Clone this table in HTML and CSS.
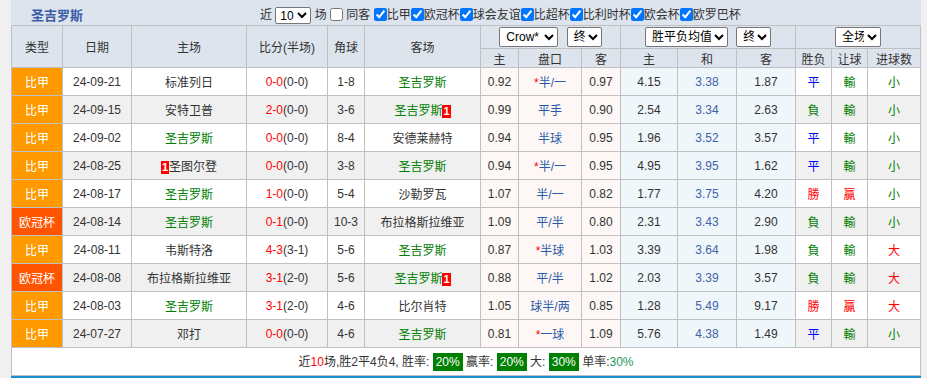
FILE: index.html
```html
<!DOCTYPE html>
<html lang="zh-CN">
<head>
    <meta charset="UTF-8">
    <title>圣吉罗斯 近期战绩</title>
    <link rel="stylesheet" href="styles.css">
</head>
<body>
    <div class="panel">
        <div class="panel-head">
            <div class="team-title">圣吉罗斯</div>
            <div class="filters">
                近 <select class="sel-count"><option>10</option></select> 场
                <input type="checkbox"> 同客
                <input type="checkbox" checked>比甲<input type="checkbox" checked>欧冠杯<input type="checkbox" checked>球会友谊<input type="checkbox" checked>比超杯<input type="checkbox" checked>比利时杯<input type="checkbox" checked>欧会杯<input type="checkbox" checked>欧罗巴杯
            </div>
        </div>
        <table class="record">
            <colgroup>
                <col class="w-type"><col class="w-date"><col class="w-team"><col class="w-score"><col class="w-corner"><col class="w-team2">
                <col class="w-a1"><col class="w-a2"><col class="w-a3">
                <col class="w-e1"><col class="w-e2"><col class="w-e3">
                <col class="w-r1"><col class="w-r2"><col class="w-r3">
            </colgroup>
            <thead>
                <tr class="head-top">
                    <th rowspan="2">类型</th>
                    <th rowspan="2">日期</th>
                    <th rowspan="2">主场</th>
                    <th rowspan="2">比分(半场)</th>
                    <th rowspan="2">角球</th>
                    <th rowspan="2">客场</th>
                    <th colspan="3"><select class="sel-crow"><option>Crow*</option></select> <select class="sel-end"><option>终</option></select></th>
                    <th colspan="3"><select class="sel-avg"><option>胜平负均值</option></select> <select class="sel-end"><option>终</option></select></th>
                    <th colspan="3"><select class="sel-full"><option>全场</option></select></th>
                </tr>
                <tr class="head-sub">
                    <th>主</th><th>盘口</th><th>客</th>
                    <th>主</th><th>和</th><th>客</th>
                    <th>胜负</th><th>让球</th><th>进球数</th>
                </tr>
            </thead>
            <tbody>
                <tr>
                    <td class="type-league">比甲</td><td>24-09-21</td><td>标准列日</td>
                    <td><span class="hot">0-0</span>(0-0)</td><td>1-8</td><td class="us">圣吉罗斯</td>
                    <td class="asian">0.92</td><td class="asian line"><span class="star">*</span>半/一</td><td class="asian">0.97</td>
                    <td class="euro">4.15</td><td class="euro draw">3.38</td><td class="euro">1.87</td>
                    <td class="r-draw">平</td><td class="r-lose">輸</td><td class="r-lose">小</td>
                </tr>
                <tr class="alt">
                    <td class="type-league">比甲</td><td>24-09-15</td><td>安特卫普</td>
                    <td><span class="hot">2-0</span>(0-0)</td><td>3-6</td><td class="us">圣吉罗斯<span class="red-card">1</span></td>
                    <td class="asian">0.99</td><td class="asian line">平手</td><td class="asian">0.90</td>
                    <td class="euro">2.54</td><td class="euro draw">3.34</td><td class="euro">2.63</td>
                    <td class="r-lose">負</td><td class="r-lose">輸</td><td class="r-lose">小</td>
                </tr>
                <tr>
                    <td class="type-league">比甲</td><td>24-09-02</td><td class="us">圣吉罗斯</td>
                    <td><span class="hot">0-0</span>(0-0)</td><td>8-4</td><td>安德莱赫特</td>
                    <td class="asian">0.94</td><td class="asian line">半球</td><td class="asian">0.95</td>
                    <td class="euro">1.96</td><td class="euro draw">3.52</td><td class="euro">3.57</td>
                    <td class="r-draw">平</td><td class="r-lose">輸</td><td class="r-lose">小</td>
                </tr>
                <tr class="alt">
                    <td class="type-league">比甲</td><td>24-08-25</td><td><span class="red-card">1</span>圣图尔登</td>
                    <td><span class="hot">0-0</span>(0-0)</td><td>3-8</td><td class="us">圣吉罗斯</td>
                    <td class="asian">0.94</td><td class="asian line"><span class="star">*</span>半/一</td><td class="asian">0.95</td>
                    <td class="euro">4.95</td><td class="euro draw">3.95</td><td class="euro">1.62</td>
                    <td class="r-draw">平</td><td class="r-lose">輸</td><td class="r-lose">小</td>
                </tr>
                <tr>
                    <td class="type-league">比甲</td><td>24-08-17</td><td class="us">圣吉罗斯</td>
                    <td><span class="hot">1-0</span>(0-0)</td><td>5-4</td><td>沙勒罗瓦</td>
                    <td class="asian">1.07</td><td class="asian line">半/一</td><td class="asian">0.82</td>
                    <td class="euro">1.77</td><td class="euro draw">3.75</td><td class="euro">4.20</td>
                    <td class="r-win">勝</td><td class="r-win">贏</td><td class="r-lose">小</td>
                </tr>
                <tr class="alt">
                    <td class="type-cup">欧冠杯</td><td>24-08-14</td><td class="us">圣吉罗斯</td>
                    <td><span class="hot">0-1</span>(0-0)</td><td>10-3</td><td>布拉格斯拉维亚</td>
                    <td class="asian">1.09</td><td class="asian line">平/半</td><td class="asian">0.80</td>
                    <td class="euro">2.31</td><td class="euro draw">3.43</td><td class="euro">2.90</td>
                    <td class="r-lose">負</td><td class="r-lose">輸</td><td class="r-lose">小</td>
                </tr>
                <tr>
                    <td class="type-league">比甲</td><td>24-08-11</td><td>韦斯特洛</td>
                    <td><span class="hot">4-3</span>(3-1)</td><td>5-6</td><td class="us">圣吉罗斯</td>
                    <td class="asian">0.87</td><td class="asian line"><span class="star">*</span>半球</td><td class="asian">1.03</td>
                    <td class="euro">3.39</td><td class="euro draw">3.64</td><td class="euro">1.98</td>
                    <td class="r-lose">負</td><td class="r-lose">輸</td><td class="r-win">大</td>
                </tr>
                <tr class="alt">
                    <td class="type-cup">欧冠杯</td><td>24-08-08</td><td>布拉格斯拉维亚</td>
                    <td><span class="hot">3-1</span>(2-0)</td><td>5-6</td><td class="us">圣吉罗斯<span class="red-card">1</span></td>
                    <td class="asian">0.88</td><td class="asian line">平/半</td><td class="asian">1.02</td>
                    <td class="euro">2.03</td><td class="euro draw">3.39</td><td class="euro">3.57</td>
                    <td class="r-lose">負</td><td class="r-lose">輸</td><td class="r-win">大</td>
                </tr>
                <tr>
                    <td class="type-league">比甲</td><td>24-08-03</td><td class="us">圣吉罗斯</td>
                    <td><span class="hot">3-1</span>(2-0)</td><td>4-6</td><td>比尔肖特</td>
                    <td class="asian">1.05</td><td class="asian line">球半/两</td><td class="asian">0.85</td>
                    <td class="euro">1.28</td><td class="euro draw">5.49</td><td class="euro">9.17</td>
                    <td class="r-win">勝</td><td class="r-win">贏</td><td class="r-win">大</td>
                </tr>
                <tr class="alt">
                    <td class="type-league">比甲</td><td>24-07-27</td><td>邓打</td>
                    <td><span class="hot">0-0</span>(0-0)</td><td>4-6</td><td class="us">圣吉罗斯</td>
                    <td class="asian">0.81</td><td class="asian line"><span class="star">*</span>一球</td><td class="asian">1.09</td>
                    <td class="euro">5.76</td><td class="euro draw">4.38</td><td class="euro">1.49</td>
                    <td class="r-draw">平</td><td class="r-lose">輸</td><td class="r-lose">小</td>
                </tr>
            </tbody>
            <tfoot>
                <tr>
                    <td colspan="15" class="summary">
                        近<span class="hot">10</span>场,胜2平4负4, 胜率: <span class="rate">20%</span> 赢率: <span class="rate">20%</span> 大: <span class="rate">30%</span> 单率:<span class="odd-rate">30%</span>
                    </td>
                </tr>
            </tfoot>
        </table>
        <div class="next-bar"></div>
    </div>
</body>
</html>
```

FILE: styles.css
```css
body {
    margin: 0;
    background-color: #f0f0f0;
    font-family: "Liberation Sans", "Noto Sans CJK SC", sans-serif;
    font-size: 12px;
    color: #333;
}

.panel {
    margin-left: 11px;
    width: 910px;
}

/* title bar with the filters */
.panel-head {
    display: flex;
    align-items: center;
    height: 21px;
    padding-top: 4px;
    background-color: #dde4ed;
}

.team-title {
    width: 229px;
    padding-left: 20px;
    font-size: 13px;
    font-weight: bold;
    color: #3a5da6;
}

.filters {
    white-space: nowrap;
    color: #333;
}

.filters input[type=checkbox] {
    margin: 0;
    width: 13px;
    height: 13px;
    vertical-align: -2px;
}

select {
    font-family: inherit;
    font-size: 12px;
    color: #000;
    height: 17px;
    padding: 0 0 0 2px;
    border: 1px solid #767676;
    border-radius: 2px;
    background-color: #fff;
    vertical-align: middle;
}

.sel-count {
    width: 36px;
    padding: 0;
}

/* record table */
.record {
    width: 910px;
    table-layout: fixed;
    border-collapse: collapse;
    background-color: #fff;
}

.record th,
.record td {
    border: 1px solid #c0c0c0;
    padding: 0;
    text-align: center;
    white-space: nowrap;
    overflow: hidden;
}

.record th {
    font-weight: normal;
    color: #333;
    background-color: #dde4ed;
}

.w-type { width: 51px; }
.w-date { width: 69px; }
.w-team { width: 115px; }
.w-score { width: 81px; }
.w-corner { width: 37px; }
.w-team2 { width: 116px; }
.w-a1 { width: 38px; }
.w-a2 { width: 63px; }
.w-a3 { width: 39px; }
.w-e1 { width: 57px; }
.w-e2 { width: 59px; }
.w-e3 { width: 59px; }
.w-r1 { width: 36px; }
.w-r2 { width: 36px; }
.w-r3 { width: 53px; }

.head-top th {
    height: 22px;
}

.head-sub th {
    height: 18px;
}

.head-top select {
    height: 20px;
}

.sel-crow { width: 59px; margin-right: 5px; }
.sel-end { width: 35px; }
.sel-avg { width: 83px; margin-right: 5px; }
.sel-full { width: 46px; }

.record tbody td {
    height: 27px;
}

.record .alt td {
    background-color: #f0f0f0;
}

.record td.asian {
    background-color: #fdf8f5;
}

.record td.euro {
    background-color: #f0f7fb;
}

.record td.type-league {
    background-color: #ff9900;
    color: #fff;
}

.record td.type-cup {
    background-color: #ff5500;
    color: #fff;
}

.us {
    color: #008000;
}

.hot {
    color: #ff0000;
}

.star {
    color: #ff0000;
}

.line {
    color: #2a5aa8;
}

.draw {
    color: #3f62a8;
}

.r-draw { color: #0000ff; }
.r-lose { color: #008000; }
.r-win { color: #ff0000; }

.red-card {
    display: inline-block;
    background-color: #ff0000;
    color: #fff;
    font-weight: bold;
    font-size: 11px;
    line-height: 13px;
    padding: 0 1px;
    vertical-align: 0;
}

/* summary line */
.record .summary {
    height: 27px;
    background-color: #fff;
}

.rate {
    display: inline-block;
    background-color: #008000;
    color: #fff;
    line-height: 18px;
    padding: 0 3px;
}

.odd-rate {
    color: #1a9a5a;
}

.next-bar {
    height: 10px;
    background-color: #1b8fd2;
}
```
